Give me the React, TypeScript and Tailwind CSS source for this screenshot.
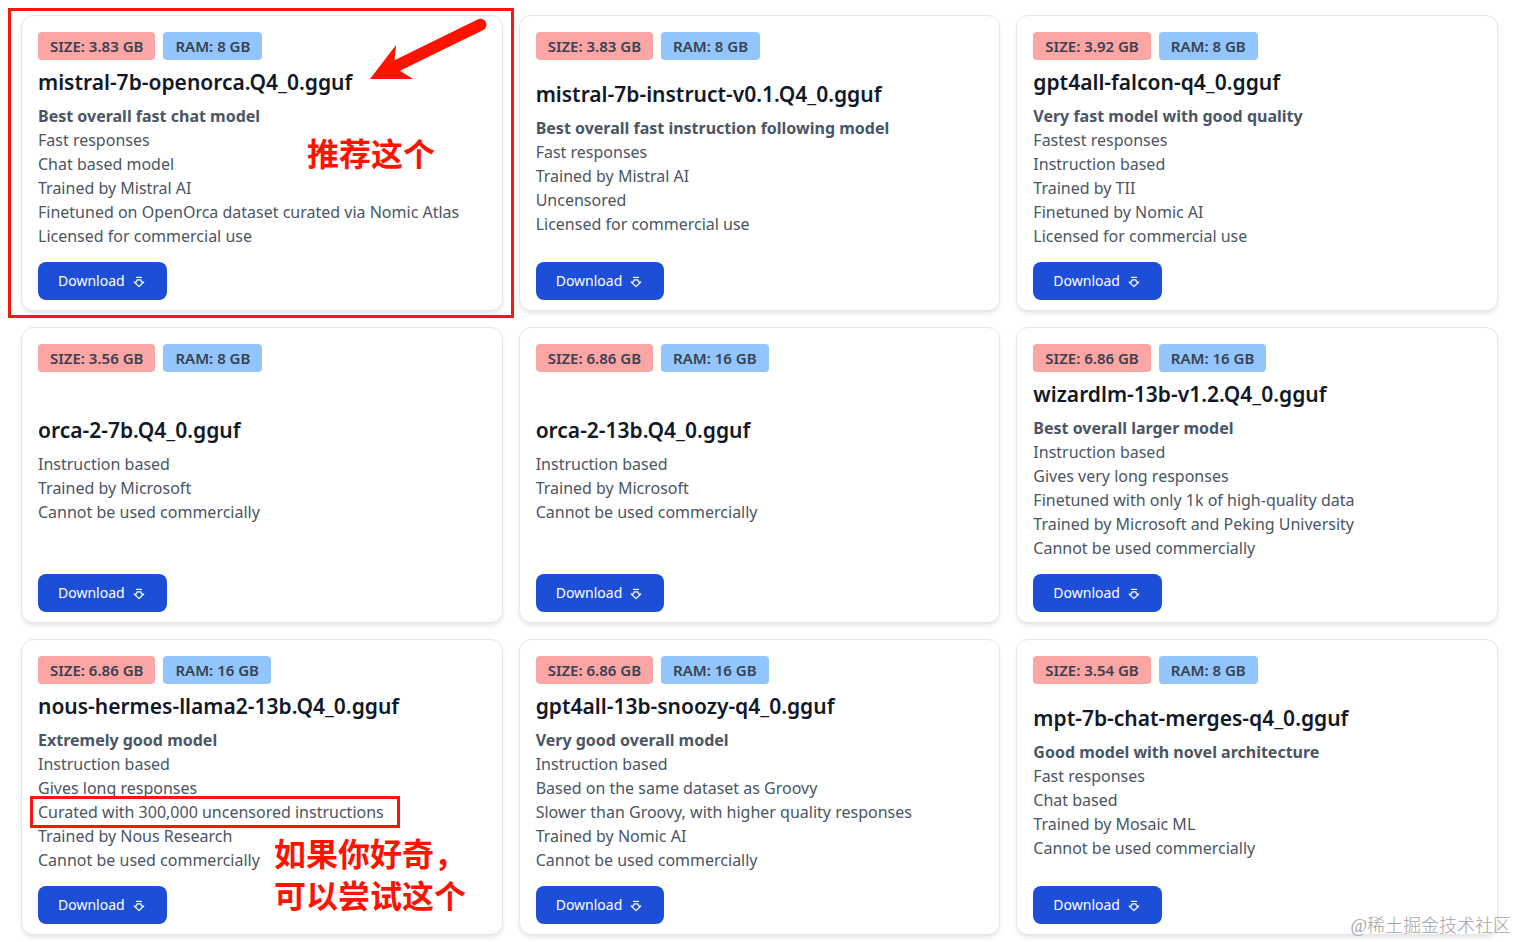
import type { ReactNode } from "react";

type Model = {
  file: string;
  size: string;
  ram: string;
  headline?: string;
  facts: string[];
  highlight?: string;
  extra?: ReactNode;
};

const noteText =
  "absolute whitespace-nowrap font-['Noto_Sans_CJK_SC',sans-serif] text-[32px] font-bold text-[#ff1200]";

function RecommendedNote() {
  return (
    <>
      <div className="pointer-events-none absolute -top-2 -right-3 -bottom-2 -left-3.5 border-3 border-[#f9170b]" />
      <svg
        className="absolute top-0 left-[344px] h-[68px] w-[124px]"
        viewBox="366 16 124 68"
        fill="#ff1200"
        aria-hidden="true"
      >
        <path d="M370 79 L396 45 L394.5 60.3 L477.5 19.4 A6 6 0 0 1 483.3 30 L400 70.7 L413 79 Z" />
      </svg>
      <p className={`${noteText} top-[115px] left-[285px] leading-[42px]`}>推荐这个</p>
    </>
  );
}

function CuriousNote() {
  return (
    <p className={`${noteText} top-[191px] left-[252px] leading-[42px]`}>
      如果你好奇，
      <br />
      可以尝试这个
    </p>
  );
}

const models: Model[] = [
  {
    file: "mistral-7b-openorca.Q4_0.gguf",
    size: "3.83 GB",
    ram: "8 GB",
    headline: "Best overall fast chat model",
    facts: [
      "Fast responses",
      "Chat based model",
      "Trained by Mistral AI",
      "Finetuned on OpenOrca dataset curated via Nomic Atlas",
      "Licensed for commercial use",
    ],
    extra: <RecommendedNote />,
  },
  {
    file: "mistral-7b-instruct-v0.1.Q4_0.gguf",
    size: "3.83 GB",
    ram: "8 GB",
    headline: "Best overall fast instruction following model",
    facts: ["Fast responses", "Trained by Mistral AI", "Uncensored", "Licensed for commercial use"],
  },
  {
    file: "gpt4all-falcon-q4_0.gguf",
    size: "3.92 GB",
    ram: "8 GB",
    headline: "Very fast model with good quality",
    facts: [
      "Fastest responses",
      "Instruction based",
      "Trained by TII",
      "Finetuned by Nomic AI",
      "Licensed for commercial use",
    ],
  },
  {
    file: "orca-2-7b.Q4_0.gguf",
    size: "3.56 GB",
    ram: "8 GB",
    facts: ["Instruction based", "Trained by Microsoft", "Cannot be used commercially"],
  },
  {
    file: "orca-2-13b.Q4_0.gguf",
    size: "6.86 GB",
    ram: "16 GB",
    facts: ["Instruction based", "Trained by Microsoft", "Cannot be used commercially"],
  },
  {
    file: "wizardlm-13b-v1.2.Q4_0.gguf",
    size: "6.86 GB",
    ram: "16 GB",
    headline: "Best overall larger model",
    facts: [
      "Instruction based",
      "Gives very long responses",
      "Finetuned with only 1k of high-quality data",
      "Trained by Microsoft and Peking University",
      "Cannot be used commercially",
    ],
  },
  {
    file: "nous-hermes-llama2-13b.Q4_0.gguf",
    size: "6.86 GB",
    ram: "16 GB",
    headline: "Extremely good model",
    facts: [
      "Instruction based",
      "Gives long responses",
      "Curated with 300,000 uncensored instructions",
      "Trained by Nous Research",
      "Cannot be used commercially",
    ],
    highlight: "Curated with 300,000 uncensored instructions",
    extra: <CuriousNote />,
  },
  {
    file: "gpt4all-13b-snoozy-q4_0.gguf",
    size: "6.86 GB",
    ram: "16 GB",
    headline: "Very good overall model",
    facts: [
      "Instruction based",
      "Based on the same dataset as Groovy",
      "Slower than Groovy, with higher quality responses",
      "Trained by Nomic AI",
      "Cannot be used commercially",
    ],
  },
  {
    file: "mpt-7b-chat-merges-q4_0.gguf",
    size: "3.54 GB",
    ram: "8 GB",
    headline: "Good model with novel architecture",
    facts: ["Fast responses", "Chat based", "Trained by Mosaic ML", "Cannot be used commercially"],
  },
];

function DownloadIcon() {
  return (
    <svg
      className="mt-0.5 h-3 w-3"
      viewBox="0 0 12 12"
      fill="none"
      stroke="currentColor"
      strokeWidth="1.2"
      strokeLinejoin="round"
      aria-hidden="true"
    >
      <path d="M3 1.4H9" />
      <path d="M4.2 3.8H7.8L8.6 6H10.8L6 10.6L1.2 6H3.4Z" />
    </svg>
  );
}

function ModelCard({ model }: { model: Model }) {
  return (
    <article className="relative flex flex-col justify-between rounded-xl border border-[#e5e7eb] bg-white px-4 pt-4 pb-2.5 shadow-[0_3px_5px_-1px_rgba(0,0,0,0.12)]">
      <div className="flex gap-2 text-[15px] leading-5 font-semibold text-[#374151]">
        <span className="rounded-sm bg-[#fca5a5] px-3 py-1">SIZE: {model.size}</span>
        <span className="rounded-sm bg-[#93c5fd] px-3 py-1">RAM: {model.ram}</span>
      </div>
      <div className="mt-2 mb-3.5">
        <h2 className="text-[21px] leading-7 font-semibold whitespace-nowrap text-[#111827]">
          {model.file}
        </h2>
        <ul className="mt-2 leading-6 whitespace-nowrap text-[#4b5563]">
          {model.headline && <li className="font-bold">{model.headline}</li>}
          {model.facts.map((fact) => (
            <li key={fact}>
              {fact === model.highlight ? (
                <span className="relative inline-block">
                  {fact}
                  <span className="absolute -inset-y-1 -right-4 -left-2 border-3 border-[#f9170b]" />
                </span>
              ) : (
                fact
              )}
            </li>
          ))}
        </ul>
      </div>
      <button
        type="button"
        className="flex h-[38px] items-center gap-2 self-start rounded-lg bg-[#1d4ed8] pr-[22px] pl-5 text-sm text-white"
      >
        Download
        <DownloadIcon />
      </button>
      {model.extra}
    </article>
  );
}

export default function App() {
  return (
    <main className="relative bg-white pt-[15px] pr-[19px] pb-[7px] pl-[21px] font-['Noto_Sans','Noto_Sans_CJK_SC',sans-serif] text-base">
      <div className="grid grid-cols-3 gap-4">
        {models.map((model) => (
          <ModelCard key={model.file} model={model} />
        ))}
      </div>
      <p className="absolute right-1.5 bottom-0.5 font-['Liberation_Serif','Noto_Sans_CJK_SC',serif] text-lg font-light text-[#a3a3a3]">
        @稀土掘金技术社区
      </p>
    </main>
  );
}
